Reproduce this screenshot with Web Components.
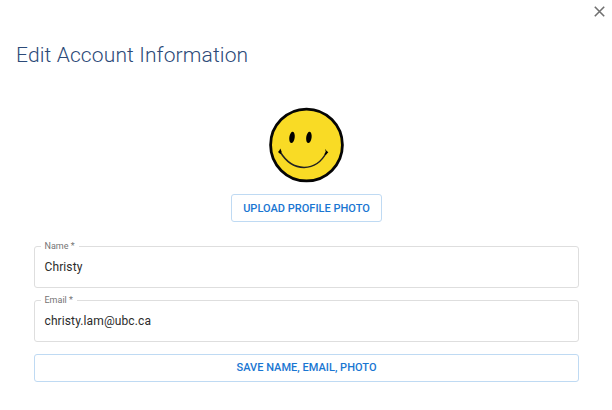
<!DOCTYPE html>
<html lang="en"><head><meta charset="utf-8"><title>Edit Account Information</title>
<style>html,body{margin:0;background:#fff;font-family:Roboto,"Liberation Sans",sans-serif}body{width:612px;height:410px;overflow:hidden}</style></head>
<body><account-dialog></account-dialog>
<script>
const define = (name, html) => customElements.define(name, class extends HTMLElement {
  constructor() { super(); this.attachShadow({ mode: 'open' }).innerHTML = html; }
});
define('close-button', `<style>:host{display:block;width:11px;height:11px}svg{display:block}</style>
<svg width="11" height="11" viewBox="0 0 11 11"><path d="M.8.8 10.2 10.2M10.2.8.8 10.2" stroke="#707070" stroke-width="1.6" fill="none"/></svg>`);
define('profile-photo', `<style>:host{display:block;width:76px;height:76px}svg{display:block}</style>
<svg width="76" height="76" viewBox="0 0 76 76"><circle cx="37.500" cy="38" r="35.900" fill="#f9db25" stroke="#050505" stroke-width="2.8"/>
<ellipse cx="23" cy="30.400" rx="2.7" ry="5.700" transform="rotate(8 23 30.400)"/><ellipse cx="39.900" cy="30.400" rx="2.7" ry="5.700" transform="rotate(8 39.900 30.400)"/>
<path d="M11.300 45C23.500 65.500 47 65.500 57.700 45" fill="none" stroke="#222" stroke-width="1.500"/>
<path d="M11.300 41.600Q10.500 43.800 9 45L11.500 47.200 12.600 44.500ZM56.200 41.800Q57.200 44 59.300 45.200L56.800 48 55.300 47.300 56.700 45Z"/></svg>`);
define('outline-button', `<style>:host{display:flex;box-sizing:border-box;height:28px;align-items:center;justify-content:center;border:1px solid #bfdaf3;border-radius:3px;color:#1976d2;font-size:11px;font-weight:500;line-height:19px;letter-spacing:.02px;text-transform:uppercase;white-space:nowrap}</style><slot></slot>`);
define('text-field', `<style>:host{display:block;position:relative;box-sizing:border-box;height:42px;border:1px solid #dedede;border-radius:3px;padding:11px 9.500px;color:#2b2b2b;font-size:12px;line-height:18px;letter-spacing:.11px}
.label{position:absolute;left:6px;top:-7px;padding:0 4px 0 3.500px;background:#fff;color:#757575;font-size:9px;line-height:13px;letter-spacing:0;white-space:nowrap}</style><span class="label"><slot name="label"></slot></span><slot></slot>`);
define('account-dialog', `<style>:host{display:flex;flex-direction:column;box-sizing:border-box;width:612px;height:410px;padding:6px 33px 0 34px}
close-button{align-self:flex-end;margin-right:-26px}
h1{margin:23px 0 0 -18px;font-size:21px;font-weight:300;line-height:30px;letter-spacing:.13px;color:#2c4a78}
profile-photo{align-self:center;margin-top:37px}
.upload{align-self:center;width:151px;margin-top:11px}
.fields{display:flex;flex-direction:column;gap:12px;margin-top:24px}
.save{padding-bottom:2px}</style>
<close-button></close-button><h1>Edit Account Information</h1><profile-photo></profile-photo>
<outline-button class="upload">Upload profile photo</outline-button>
<div class="fields"><text-field><span slot="label">Name *</span>Christy</text-field><text-field><span slot="label">Email *</span>christy.lam@ubc.ca</text-field><outline-button class="save">Save name, email, photo</outline-button></div>`);
</script></body></html>
